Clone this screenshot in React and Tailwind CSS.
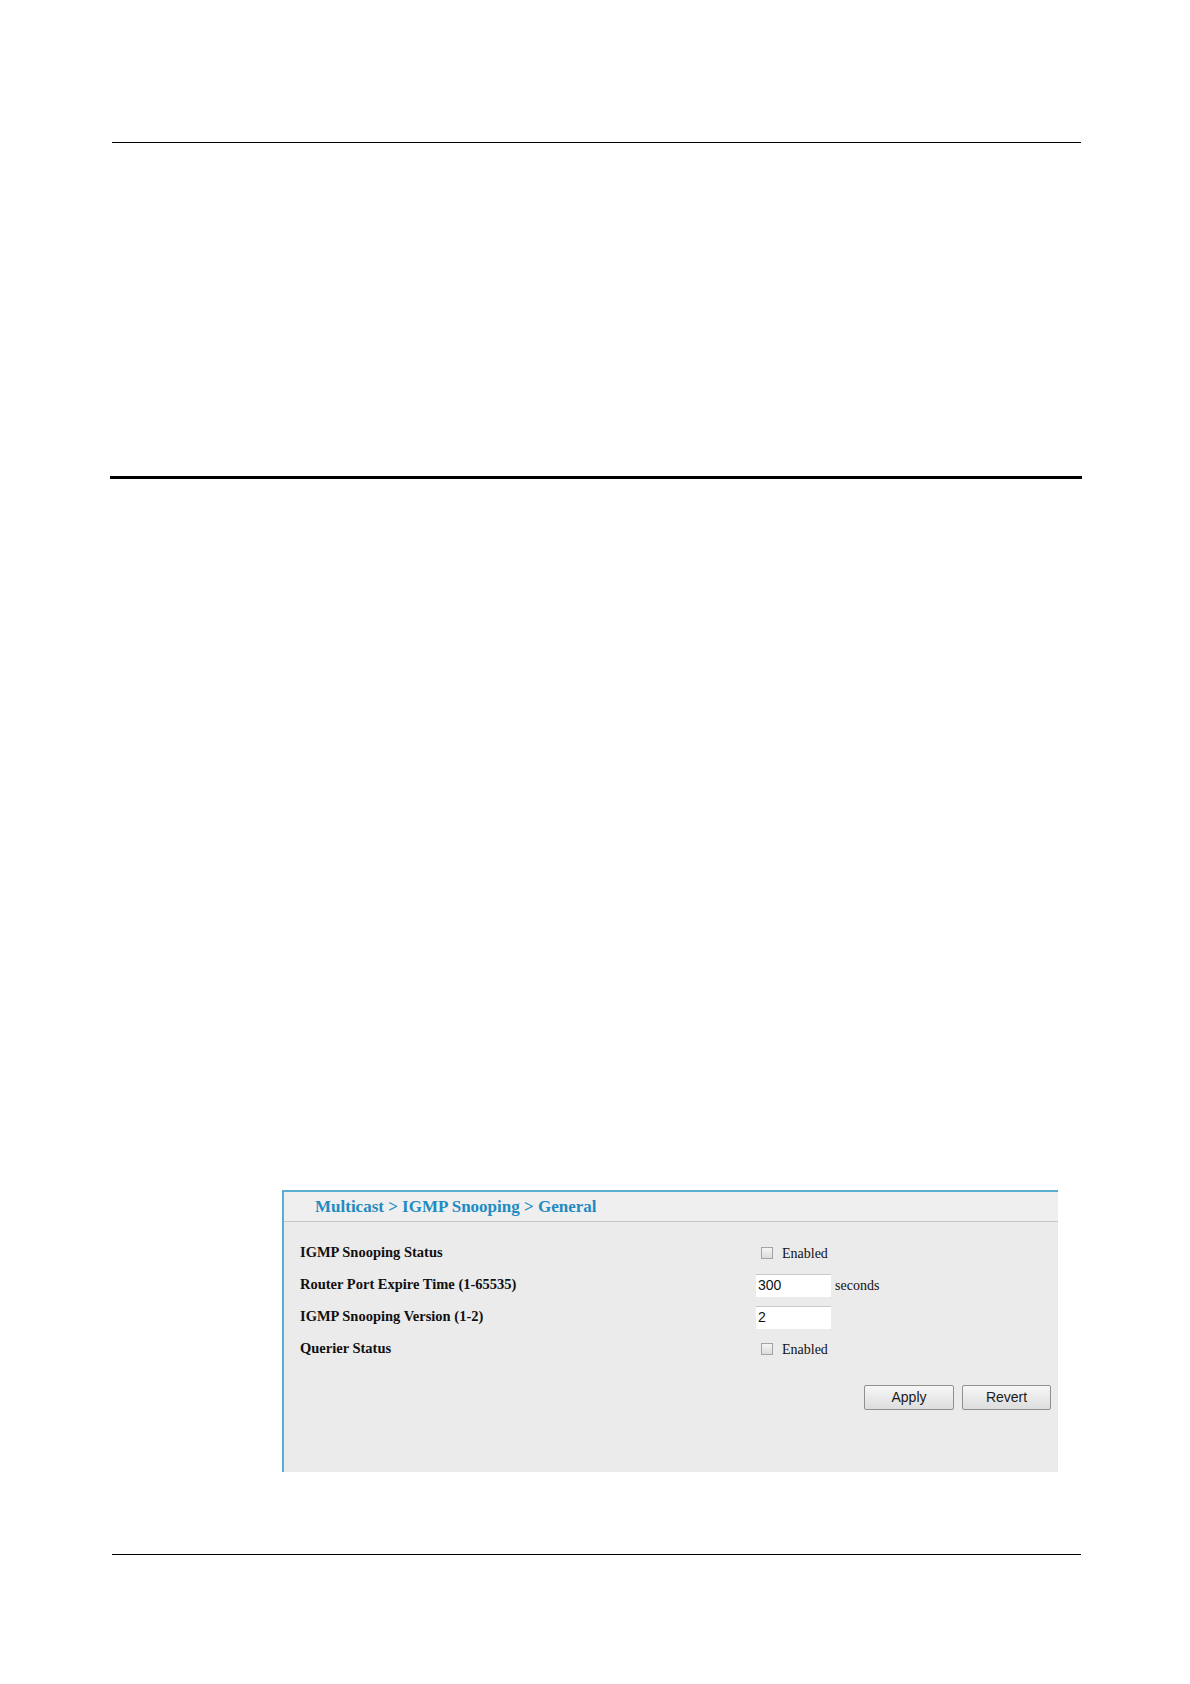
export default function App() {
  const rows = [
    { label: 'IGMP Snooping Status', type: 'check' },
    { label: 'Router Port Expire Time (1-65535)', type: 'input', value: '300', unit: 'seconds' },
    { label: 'IGMP Snooping Version (1-2)', type: 'input', value: '2' },
    { label: 'Querier Status', type: 'check' },
  ];

  return (
    <div className="w-[1190px] min-h-[1684px] bg-white pt-[142px]">
      {/* Header rule */}
      <div className="ml-[112px] w-[969px] h-px bg-black"></div>

      {/* Section rule */}
      <div className="ml-[110px] mt-[333px] w-[972px] h-[3px] bg-black"></div>

      {/* Screenshot panel */}
      <div className="ml-[282px] mt-[711px] w-[776px] h-[282px] border-t-2 border-l-2 border-[#5aaed4] bg-[#ebebeb]">
        <div className="h-[30px] flex items-center pl-[31px] pt-px bg-[#efefef] border-b border-[#c6c6c6]">
          <span className="text-[17px] font-bold text-[#1f8bc2] font-['Liberation_Serif',serif]">
            Multicast &gt; IGMP Snooping &gt; General
          </span>
        </div>

        <div className="pt-[15px] font-['Liberation_Serif',serif]">
          {rows.map((row) => (
            <div key={row.label} className="h-[32px] flex items-center pl-[16px]">
              <div className="w-[456px] text-[14.5px] font-bold text-[#111]">{row.label}</div>
              {row.type === 'check' ? (
                <div className="flex items-center">
                  <span className="ml-[5px] w-[12px] h-[12px] border border-[#a3a3a3] bg-gradient-to-b from-[#f4f4f4] to-[#dcdcdc]"></span>
                  <span className="ml-[9px] text-[14px] text-[#111]">Enabled</span>
                </div>
              ) : (
                <div className="flex items-center">
                  <div className="w-[75px] h-[23px] bg-white border-t border-[#c9c9c9] pl-[2px] flex items-center text-[14px] text-[#111] font-['Liberation_Sans',sans-serif]">
                    {row.value}
                  </div>
                  {row.unit && <span className="ml-[4px] text-[14px] text-[#111]">{row.unit}</span>}
                </div>
              )}
            </div>
          ))}

          <div className="mt-[20px] pr-[7px] flex justify-end gap-[8px] font-['Liberation_Sans',sans-serif]">
            <button
              type="button"
              className="w-[90px] h-[25px] rounded-[2px] border border-[#8f9090] bg-gradient-to-b from-[#f7f7f7] to-[#dddddd] text-[14px] text-[#1a1a1a]"
            >
              Apply
            </button>
            <button
              type="button"
              className="w-[89px] h-[25px] rounded-[2px] border border-[#8f9090] bg-gradient-to-b from-[#f7f7f7] to-[#dddddd] text-[14px] text-[#1a1a1a]"
            >
              Revert
            </button>
          </div>
        </div>
      </div>

      {/* Footer rule */}
      <div className="ml-[112px] mt-[82px] w-[969px] h-px bg-black"></div>
    </div>
  );
}
